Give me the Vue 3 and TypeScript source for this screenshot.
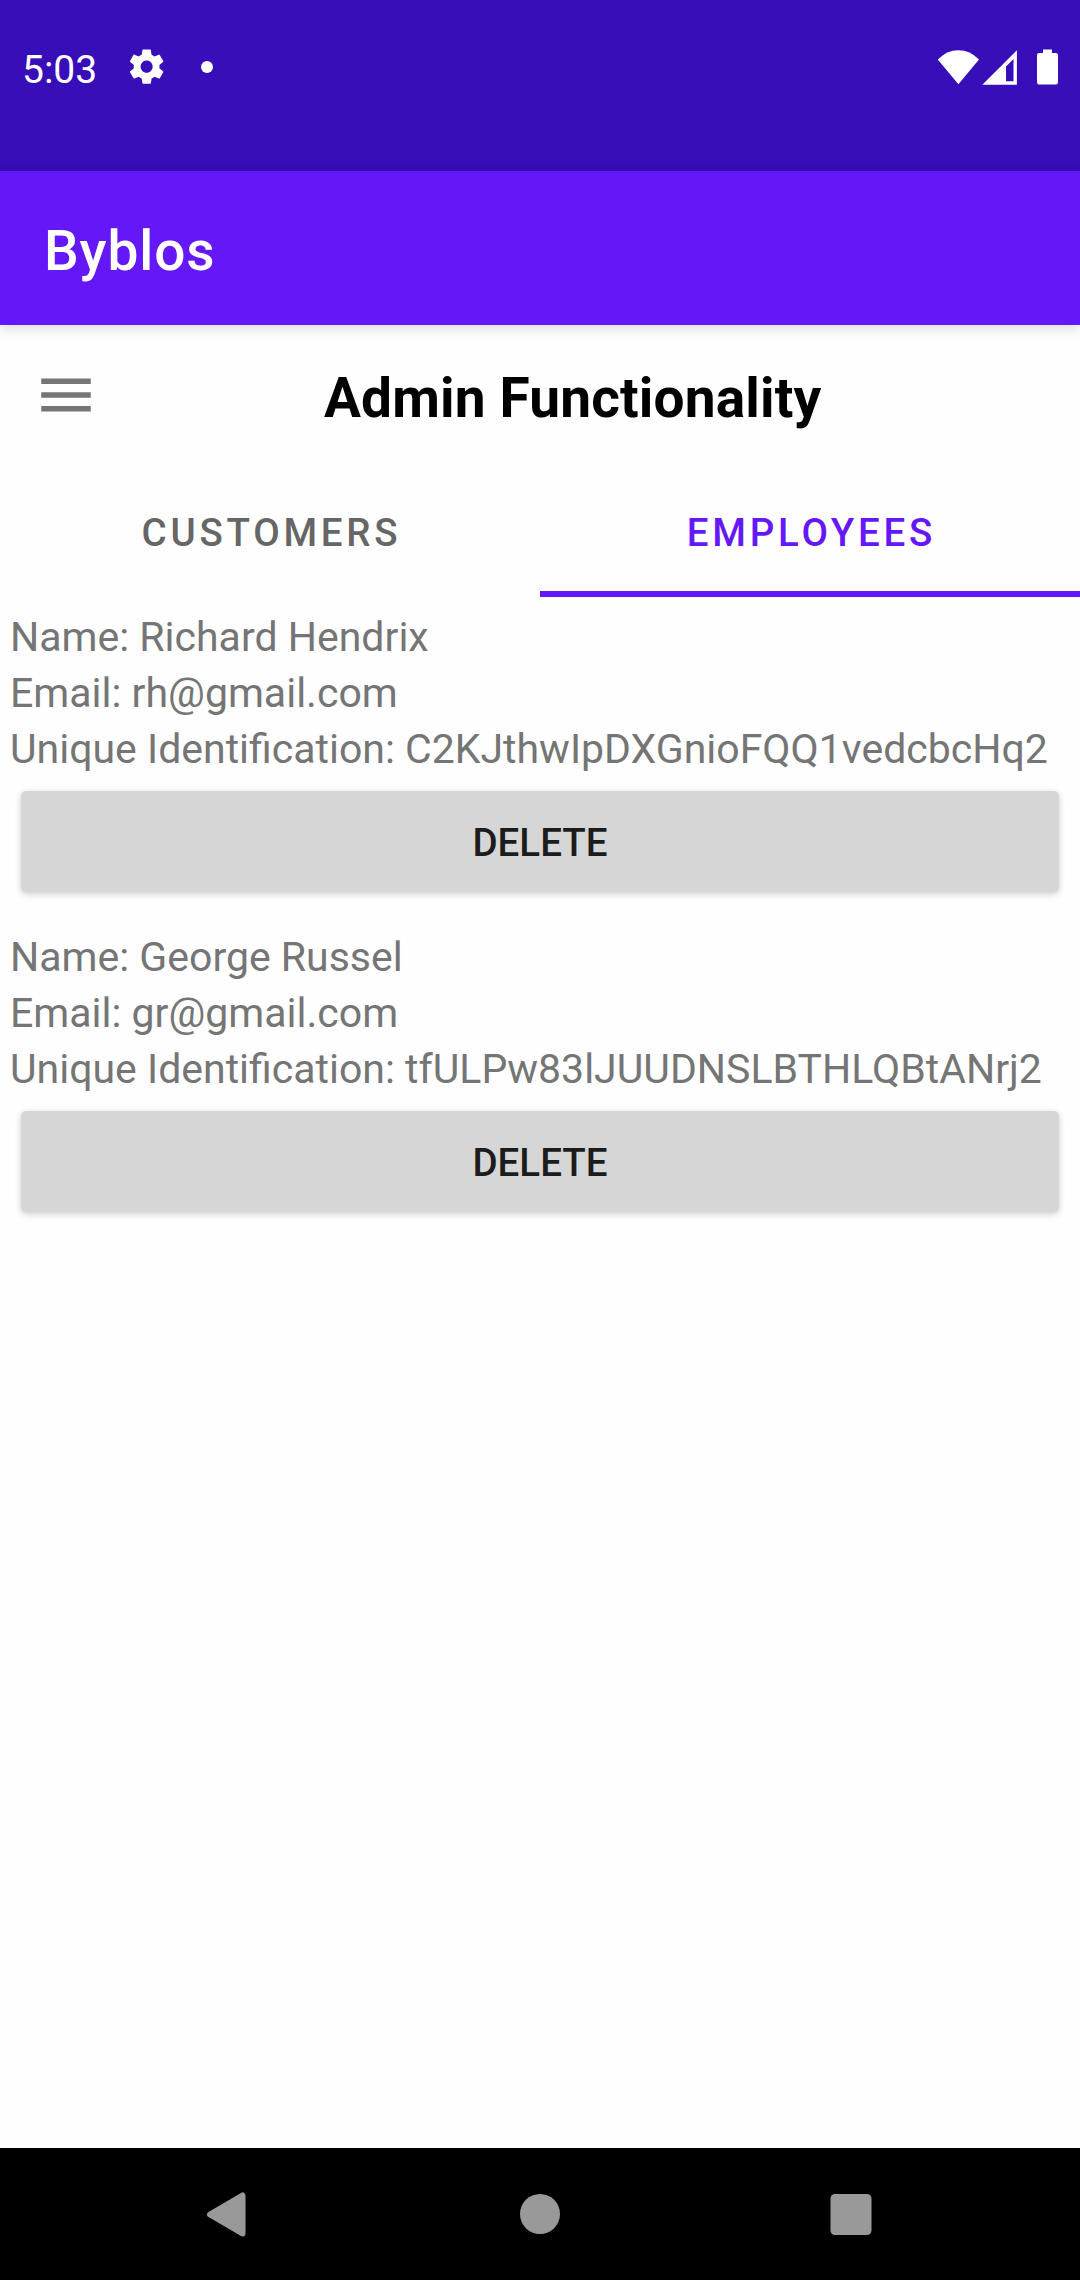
<script setup lang="ts">
import { ref } from 'vue'

interface Account {
  name: string
  email: string
  uid: string
}

const tabs: string[] = ['Customers', 'Employees']
const activeTab = ref<string>('Employees')

const accounts = ref<Account[]>([
  { name: 'Richard Hendrix', email: 'rh@gmail.com', uid: 'C2KJthwIpDXGnioFQQ1vedcbcHq2' },
  { name: 'George Russel', email: 'gr@gmail.com', uid: 'tfULPw83lJUUDNSLBTHLQBtANrj2' },
])

function remove(uid: string): void {
  accounts.value = accounts.value.filter((a) => a.uid !== uid)
}
</script>

<template>
  <div class="screen">
    <div class="status">
      <span class="time">5:03</span>
      <svg class="gear" viewBox="0 0 24 24">
        <path d="M19.43 12.98c.04-.32.07-.64.07-.98s-.03-.66-.07-.98l2.11-1.65c.19-.15.24-.42.12-.64l-2-3.46c-.12-.22-.39-.3-.61-.22l-2.49 1c-.52-.4-1.08-.73-1.69-.98l-.38-2.65C14.46 2.18 14.25 2 14 2h-4c-.25 0-.46.18-.49.42l-.38 2.65c-.61.25-1.17.59-1.69.98l-2.49-1c-.23-.09-.49 0-.61.22l-2 3.46c-.13.22-.07.49.12.64l2.11 1.65c-.04.32-.07.65-.07.98s.03.66.07.98l-2.11 1.65c-.19.15-.24.42-.12.64l2 3.46c.12.22.39.3.61.22l2.49-1c.52.4 1.08.73 1.69.98l.38 2.65c.03.24.24.42.49.42h4c.25 0 .46-.18.49-.42l.38-2.65c.61-.25 1.17-.59 1.69-.98l2.49 1c.23.09.49 0 .61-.22l2-3.46c.12-.22.07-.49-.12-.64l-2.11-1.65zM12 15.5c-1.93 0-3.5-1.57-3.5-3.5s1.57-3.5 3.5-3.5 3.5 1.57 3.5 3.5-1.57 3.5-3.5 3.5z" />
      </svg>
      <span class="dot"></span>
      <svg class="signals" viewBox="0 0 122 36">
        <path d="M.8 10.500Q9.600 1.200 21.400 1.200T42 10.500L21.400 35.300Z" />
        <path fill-rule="evenodd" d="M45.300 35.700L79.900 1.300V35.700ZM69 17.500V32.200H76.500V10Z" />
        <path d="M106 .500h9v3.500h4q2 0 2 2v27.500q0 2-2 2H102q-2 0-2-2V6q0-2 2-2h4z" />
      </svg>
    </div>

    <header class="appbar">Byblos</header>

    <div class="heading">
      <svg class="menu" viewBox="0 0 24 24">
        <path d="M3 18h18v-2H3v2zm0-5h18v-2H3v2zm0-7v2h18V6H3z" />
      </svg>
      <h1>Admin Functionality</h1>
    </div>

    <nav class="tabs">
      <div
        v-for="tab in tabs"
        :key="tab"
        class="tab"
        :class="{ active: tab === activeTab }"
        @click="activeTab = tab"
      >
        {{ tab }}
      </div>
    </nav>

    <main class="list">
      <section v-for="a in accounts" :key="a.uid" class="account">
        <p>Name: {{ a.name }}</p>
        <p>Email: {{ a.email }}</p>
        <p>Unique Identification: {{ a.uid }}</p>
        <button type="button" @click="remove(a.uid)">DELETE</button>
      </section>
    </main>

    <footer class="navbar">
      <svg viewBox="0 0 60 60">
        <path d="M10 30.500L42.500 11.500V49.500Z" stroke="#999" stroke-width="6" stroke-linejoin="round" />
      </svg>
      <svg viewBox="0 0 60 60"><circle cx="30" cy="30" r="20" /></svg>
      <svg viewBox="0 0 60 60"><rect x="9.500" y="10" width="41" height="41" rx="4.500" /></svg>
    </footer>
  </div>
</template>

<style>
body {
  margin: 0;
}
</style>

<style scoped>
.screen {
  width: 1080px;
  height: 2280px;
  display: flex;
  flex-direction: column;
  overflow: hidden;
  background: #fefefe;
  font-family: Roboto, sans-serif;
}

.status {
  height: 134px;
  padding: 0 21px 37px 22px;
  box-sizing: content-box;
  display: flex;
  align-items: center;
  flex: none;
  background: #370eb7;
  color: #fff;
  fill: #fff;
}

.time {
  width: 104px;
  font-size: 39px;
  line-height: 46px;
  padding-top: 6px;
}

.gear {
  width: 41.25px;
  height: 41.25px;
}

.dot {
  width: 12px;
  height: 12px;
  margin-left: 33.75px;
  border-radius: 50%;
  background: #fff;
}

.signals {
  width: 122px;
  height: 36px;
  margin-left: auto;
}

.appbar {
  flex: none;
  height: 154px;
  padding-left: 44px;
  background: #6417f7;
  box-shadow: 0 3px 12px rgba(0, 0, 0, 0.15);
  color: #fff;
  font-size: 55px;
  font-weight: 500;
  line-height: 160px;
  letter-spacing: 0.9px;
}

.heading {
  flex: none;
  height: 134px;
  padding: 3px 0;
  display: flex;
  align-items: center;
}

.menu {
  width: 66px;
  height: 66px;
  margin-left: 33px;
  fill: #757575;
}

h1 {
  margin: 7px 0 0 225px;
  font-size: 55px;
  font-weight: 700;
  line-height: 65px;
  letter-spacing: 0.15px;
  color: #000;
}

.tabs {
  flex: none;
  display: flex;
  height: 132px;
}

.tab {
  flex: 1;
  box-sizing: border-box;
  border-bottom: 6px solid transparent;
  padding: 1px 0 0 3px;
  text-align: center;
  text-transform: uppercase;
  font-size: 38.5px;
  font-weight: 500;
  line-height: 134px;
  letter-spacing: 3.75px;
  color: #666;
}

.tab.active {
  color: #6417f7;
  border-color: #6417f7;
}

.list {
  flex: 1;
  padding-top: 12px;
}

.account {
  margin-bottom: 37px;
  padding: 0 10px;
}

.account p {
  margin: 0;
  font-size: 41px;
  line-height: 56px;
  white-space: nowrap;
  color: #757575;
}

.account button {
  display: block;
  width: 1038px;
  height: 101px;
  margin: 14px 11px 0;
  padding: 2px 0 0;
  border: 0;
  border-radius: 5px;
  background: #d6d6d6;
  box-shadow: 0 2px 6px rgba(0, 0, 0, 0.2);
  font-family: inherit;
  font-size: 38.5px;
  font-weight: 500;
  line-height: 99px;
  color: #1c1c1c;
}

.navbar {
  flex: none;
  height: 132px;
  display: flex;
  justify-content: center;
  align-items: center;
  gap: 250.500px;
  background: #000;
  fill: #999;
}

.navbar svg {
  width: 60px;
  height: 60px;
}
</style>
